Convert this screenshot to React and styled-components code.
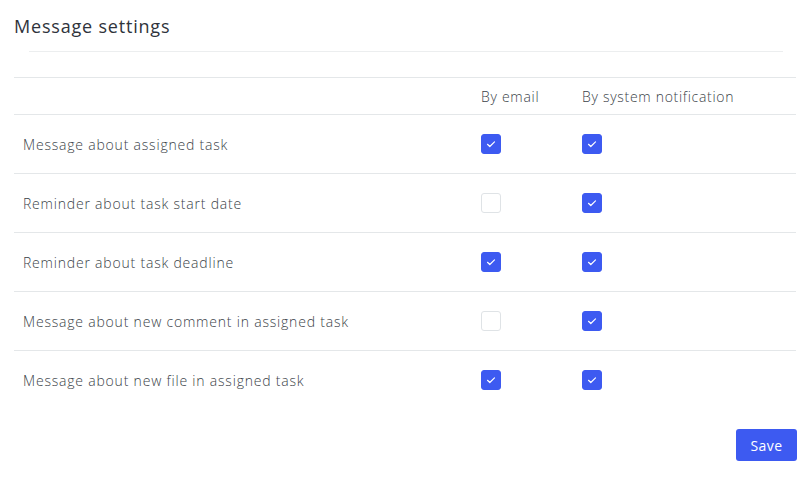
import React, { useState } from "react";
import styled, { createGlobalStyle } from "styled-components";

const GlobalStyle = createGlobalStyle`
  html, body {
    margin: 0;
    padding: 0;
    background: #fff;
  }
  body {
    font-family: "Open Sans", "Liberation Sans", sans-serif;
    color: #3b3f48;
  }
`;

const Page = styled.div`
  width: 810px;
  height: 482px;
  box-sizing: border-box;
  padding: 13px 14px 0;
`;

const Title = styled.h2`
  margin: 0;
  font-size: 18px;
  font-weight: 400;
  line-height: 26px;
  color: #2f333b;
  letter-spacing: 0.8px;
`;

const Divider = styled.hr`
  margin: 12px 13px 25px 15px;
  border: 0;
  border-top: 1px solid #eceeef;
`;

const Grid = styled.div`
  display: grid;
  grid-template-columns: 458px 101px 1fr;
  width: 782px;
  border-top: 1px solid #e4e7e9;
`;

const Cell = styled.div`
  display: flex;
  align-items: center;
  padding: 0 9px;
  height: ${p => (p.$head ? "36px" : "58px")};
  border-bottom: ${p => (p.$last ? "none" : "1px solid #e4e7e9")};
  font-size: 14px;
  font-weight: 300;
  letter-spacing: ${p => (p.$head ? "0.7px" : "0.8px")};
  color: #3b3f48;
`;

const Box = styled.button`
  width: 20px;
  height: 20px;
  padding: 0;
  border-radius: 3px;
  border: 1px solid ${p => (p.$on ? "#3d5af1" : "#dfe3e6")};
  background: ${p => (p.$on ? "#3d5af1" : "#fff")};
  display: flex;
  align-items: center;
  justify-content: center;
  cursor: pointer;
`;

const Footer = styled.div`
  display: flex;
  justify-content: flex-end;
  width: 783px;
  margin-top: 20px;
`;

const SaveButton = styled.button`
  width: 61px;
  height: 32px;
  border: 0;
  border-radius: 3px;
  background: #3d5af1;
  color: #fff;
  font-family: inherit;
  font-size: 14px;
  font-weight: 500;
  letter-spacing: 0.4px;
  cursor: pointer;
`;

const Check = () => (
  <svg width="12" height="12" viewBox="0 0 12 12" fill="none">
    <path d="M2.5 6.3l2.3 2.2 4.7-4.7" stroke="#fff" strokeWidth="1.2" strokeLinecap="round" strokeLinejoin="round" />
  </svg>
);

const initial = [
  { label: "Message about assigned task", email: true, system: true },
  { label: "Reminder about task start date", email: false, system: true },
  { label: "Reminder about task deadline", email: true, system: true },
  { label: "Message about new comment in assigned task", email: false, system: true },
  { label: "Message about new file in assigned task", email: true, system: true },
];

const App = () => {
  const [rows, setRows] = useState(initial);

  const toggle = (i, key) => {
    setRows(rows.map((r, idx) => (idx === i ? { ...r, [key]: !r[key] } : r)));
  };

  return (
    <Page>
      <GlobalStyle />
      <Title>Message settings</Title>
      <Divider />
      <Grid>
        <Cell $head />
        <Cell $head>By email</Cell>
        <Cell $head>By system notification</Cell>
        {rows.map((r, i) => {
          const last = i === rows.length - 1;
          return (
            <React.Fragment key={r.label}>
              <Cell $last={last}>{r.label}</Cell>
              <Cell $last={last}>
                <Box type="button" $on={r.email} onClick={() => toggle(i, "email")}>
                  {r.email && <Check />}
                </Box>
              </Cell>
              <Cell $last={last}>
                <Box type="button" $on={r.system} onClick={() => toggle(i, "system")}>
                  {r.system && <Check />}
                </Box>
              </Cell>
            </React.Fragment>
          );
        })}
      </Grid>
      <Footer>
        <SaveButton type="button">Save</SaveButton>
      </Footer>
    </Page>
  );
};

export default App;
